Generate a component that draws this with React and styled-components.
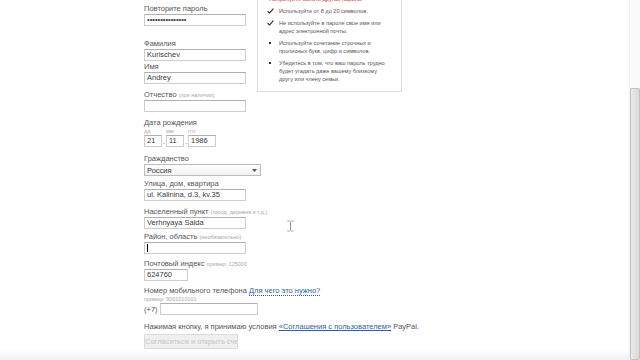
import { createGlobalStyle, styled } from "styled-components";

const GlobalStyle = createGlobalStyle`
	html, body {
		margin: 0;
		padding: 0;
		background: #fff;
	}
	body {
		font-family: "Liberation Sans", Arial, sans-serif;
		color: #444;
	}
`;

const tips = [
	{ mark: "check", text: "Используйте от 8 до 20 символов." },
	{ mark: "check", text: "Не используйте в пароле свое имя или адрес электронной почты." },
	{ mark: "dot", text: "Используйте сочетание строчных и прописных букв, цифр и символов." },
	{ mark: "dot", text: "Убедитесь в том, что ваш пароль трудно будет угадать даже вашему близкому другу или члену семьи." },
];

export default function App() {
	return (
		<>
			<GlobalStyle />
			<ScWindow>
				<ScPage>
					<ScTop>
						<ScColumn>
							<ScField>
								<ScLabel>Повторите пароль</ScLabel>
								<ScInput $width={102}>•••••••••••••••</ScInput>
							</ScField>
							<ScField $top={13}>
								<ScLabel>Фамилия</ScLabel>
								<ScInput $width={102}>Kurischev</ScInput>
							</ScField>
							<ScField $top={1}>
								<ScLabel>Имя</ScLabel>
								<ScInput $width={102}>Andrey</ScInput>
							</ScField>
							<ScField $top={6}>
								<ScLabel>
									Отчество <ScHint>(при наличии)</ScHint>
								</ScLabel>
								<ScInput $width={102} />
							</ScField>
						</ScColumn>
						<ScTips>
							<ScTipsTitle>Попробуйте ввести другой пароль.</ScTipsTitle>
							{tips.map((tip) => (
								<ScTip key={tip.text}>
									<ScMark>
										{tip.mark === "check" ? (
											<svg width="7" height="6" viewBox="0 0 7 6">
												<path d="M0.6 3.2 L2.6 5 L6.4 0.6" fill="none" stroke="#333" strokeWidth="1.2" />
											</svg>
										) : (
											<ScDot />
										)}
									</ScMark>
									<span>{tip.text}</span>
								</ScTip>
							))}
						</ScTips>
					</ScTop>

					<ScField $top={6}>
						<ScLabel>Дата рождения</ScLabel>
						<ScDateRow>
							<ScDatePart>
								<ScSmall>дд</ScSmall>
								<ScInput $width={18}>21</ScInput>
							</ScDatePart>
							<ScDot2>.</ScDot2>
							<ScDatePart>
								<ScSmall>мм</ScSmall>
								<ScInput $width={18}>11</ScInput>
							</ScDatePart>
							<ScDot2>.</ScDot2>
							<ScDatePart>
								<ScSmall>гггг</ScSmall>
								<ScInput $width={28}>1986</ScInput>
							</ScDatePart>
						</ScDateRow>
					</ScField>

					<ScField $top={7}>
						<ScLabel>Гражданство</ScLabel>
						<ScSelect>
							<span>Россия</span>
							<svg width="5" height="3" viewBox="0 0 5 3">
								<path d="M0 0 H5 L2.5 3 Z" fill="#555" />
							</svg>
						</ScSelect>
					</ScField>

					<ScField $top={3}>
						<ScLabel>Улица, дом, квартира</ScLabel>
						<ScInput $width={102}>ul. Kalinina, d.3, kv.35</ScInput>
					</ScField>

					<ScField $top={6}>
						<ScLabel>
							Населенный пункт <ScHint>(город, деревня и т.д.)</ScHint>
						</ScLabel>
						<ScInput $width={102}>Verhnyaya Salda</ScInput>
					</ScField>

					<ScField $top={3}>
						<ScLabel>
							Район, область <ScHint>(необязательно)</ScHint>
						</ScLabel>
						<ScInput $width={102}>
							<ScCaret />
						</ScInput>
					</ScField>

					<ScField $top={5}>
						<ScLabel>
							Почтовый индекс <ScHint>пример: 125000</ScHint>
						</ScLabel>
						<ScInput $width={44}>624760</ScInput>
					</ScField>

					<ScField $top={5}>
						<ScLabel>
							Номер мобильного телефона <ScDotted>Для чего это нужно?</ScDotted>
						</ScLabel>
						<ScSmall>пример: 9001010101</ScSmall>
						<ScPhoneRow>
							<span>(+7)</span>
							<ScInput $width={98} />
						</ScPhoneRow>
					</ScField>

					<ScAgree>
						Нажимая кнопку, я принимаю условия <ScLink>«Соглашения с пользователем»</ScLink> PayPal.
					</ScAgree>

					<ScButton disabled>Согласиться и открыть счет</ScButton>
					<ScFooter />

					<ScPointer width="7" height="12" viewBox="0 0 7 12">
						<path d="M0.5 0.5 H2.5 L3.5 1.5 L4.5 0.5 H6.5 V1.5 H4 V10.5 H6.5 V11.5 H4.5 L3.5 10.5 L2.5 11.5 H0.5 V10.5 H3 V1.5 H0.5 Z" fill="#222" stroke="#fff" strokeWidth="0.6" />
					</ScPointer>
				</ScPage>
				<ScScrollbar>
					<ScTrack />
					<ScThumb />
				</ScScrollbar>
			</ScWindow>
		</>
	);
}

const ScWindow = styled.div`
	width: 640px;
	height: 360px;
	display: flex;
	overflow: hidden;
`;

const ScPage = styled.div`
	position: relative;
	flex: 1;
	padding: 4px 0 0 144px;
	display: flex;
	flex-direction: column;
	align-items: flex-start;
	font-size: 7.5px;
`;

const ScTop = styled.div`
	display: flex;
	align-items: flex-start;
`;

const ScColumn = styled.div`
	width: 113px;
	display: flex;
	flex-direction: column;
`;

const ScField = styled.div`
	display: flex;
	flex-direction: column;
	margin-top: ${(p) => p.$top || 0}px;
`;

const ScLabel = styled.div`
	height: 10px;
	line-height: 9px;
	font-size: 7.5px;
	color: #555;
	white-space: nowrap;
`;

const ScHint = styled.span`
	font-size: 5.5px;
	color: #a8a8a8;
`;

const ScSmall = styled.div`
	height: 7px;
	line-height: 6px;
	font-size: 5.5px;
	color: #a8a8a8;
	white-space: nowrap;
`;

const ScInput = styled.div`
	box-sizing: border-box;
	width: ${(p) => p.$width}px;
	height: 12px;
	border: 1px solid #cdcdcd;
	border-top-color: #b0b0b0;
	background: #fff;
	padding: 0 2px;
	line-height: 10px;
	font-size: 7.5px;
	color: #3a3a3a;
	white-space: nowrap;
	overflow: hidden;
	display: flex;
	align-items: center;
`;

const ScCaret = styled.span`
	width: 1px;
	height: 8px;
	background: #000;
`;

const ScDateRow = styled.div`
	display: flex;
	align-items: flex-end;
`;

const ScDatePart = styled.div`
	display: flex;
	flex-direction: column;
`;

const ScDot2 = styled.span`
	width: 4px;
	text-align: center;
	line-height: 10px;
	font-size: 8px;
	color: #555;
`;

const ScSelect = styled.div`
	box-sizing: border-box;
	width: 117px;
	height: 12px;
	border: 1px solid #bcbcbc;
	background: linear-gradient(#fff, #f3f3f3);
	padding: 0 3px 0 2px;
	display: flex;
	align-items: center;
	justify-content: space-between;
	font-size: 7.5px;
	color: #3a3a3a;
`;

const ScPhoneRow = styled.div`
	display: flex;
	align-items: center;
	gap: 2px;
	font-size: 7.5px;
	color: #555;
`;

const ScDotted = styled.span`
	color: #2a5ea8;
	border-bottom: 1px dotted #2a5ea8;
`;

const ScLink = styled.span`
	color: #2a5ea8;
	text-decoration: underline;
`;

const ScAgree = styled.div`
	margin-top: 7px;
	line-height: 9px;
	font-size: 7.5px;
	color: #555;
	white-space: nowrap;
`;

const ScButton = styled.button`
	margin-top: 3px;
	width: 94px;
	height: 15px;
	padding: 0;
	border: 1px solid #dcdcdc;
	border-radius: 1px;
	background: #efefef;
	font-family: "Liberation Sans", Arial, sans-serif;
	font-size: 7.5px;
	color: #c6c6c6;
	white-space: nowrap;
	overflow: hidden;
`;

const ScFooter = styled.div`
	align-self: stretch;
	margin: 2px 0 0 -144px;
	flex: 1;
	background: linear-gradient(#fbfcfd, #eef1f5);
`;

const ScTips = styled.div`
	box-sizing: border-box;
	width: 145px;
	margin-top: -14px;
	padding: 4px 14px 8px 8px;
	border: 1px solid #dedede;
	background: #fff;
	display: flex;
	flex-direction: column;
	gap: 4px;
`;

const ScTipsTitle = styled.div`
	padding-left: 3px;
	line-height: 8px;
	font-size: 5.8px;
	color: #c0303a;
`;

const ScTip = styled.div`
	display: flex;
	gap: 5px;
	line-height: 8px;
	font-size: 5.6px;
	color: #555;
`;

const ScMark = styled.span`
	flex: 0 0 8px;
	height: 8px;
	display: flex;
	align-items: center;
	justify-content: center;
`;

const ScDot = styled.span`
	width: 2px;
	height: 2px;
	background: #333;
`;

const ScPointer = styled.svg`
	position: absolute;
	left: 287px;
	top: 220px;
`;

const ScScrollbar = styled.div`
	width: 10px;
	display: flex;
	flex-direction: column;
	border-left: 1px solid #f0f0f0;
	background: #fafafa;
`;

const ScTrack = styled.div`
	height: 88px;
	background: #fbfbfb;
`;

const ScThumb = styled.div`
	flex: 1;
	box-sizing: border-box;
	border: 1px solid #c3c3c3;
	border-radius: 1px;
	background: linear-gradient(90deg, #e9e9e9, #dadada);
`;
